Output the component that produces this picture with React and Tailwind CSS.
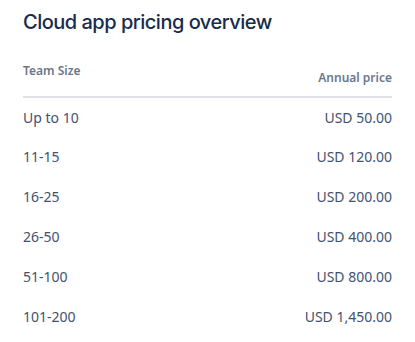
import React from 'react';

const rows = [
  { size: 'Up to 10', price: 'USD 50.00' },
  { size: '11-15', price: 'USD 120.00' },
  { size: '16-25', price: 'USD 200.00' },
  { size: '26-50', price: 'USD 400.00' },
  { size: '51-100', price: 'USD 800.00' },
  { size: '101-200', price: 'USD 1,450.00' },
];

const App = () => {
  return (
    <div className="w-[415px] h-[342px] bg-white px-[23px] pt-[8px]" style={{ fontFamily: '"Noto Sans", sans-serif' }}>
      <h1 className="text-[20px] leading-[28px] font-medium text-[#172b4d] tracking-[-0.5px]" style={{ fontFamily: 'Inter, sans-serif' }}>
        Cloud app pricing overview
      </h1>

      <table className="w-full mt-[27px] border-collapse">
        <thead>
          <tr className="border-b-2 border-[#dfe1e6]">
            <th className="text-left align-top font-semibold text-[12px] leading-[16px] text-[#6b778c] pb-[17px]">
              Team Size
            </th>
            <th className="text-right align-bottom font-semibold text-[12px] leading-[16px] text-[#6b778c] pb-[10px] pt-[5px]">
              Annual price
            </th>
          </tr>
        </thead>
        <tbody>
          {rows.map((row, i) => (
            <tr key={i} className="h-[40px]">
              <td className="text-left text-[14px] text-[#42526e] align-middle pb-[1px]">{row.size}</td>
              <td className="text-right text-[14px] text-[#42526e] align-middle pb-[1px]">{row.price}</td>
            </tr>
          ))}
        </tbody>
      </table>
    </div>
  );
};

export default App;
